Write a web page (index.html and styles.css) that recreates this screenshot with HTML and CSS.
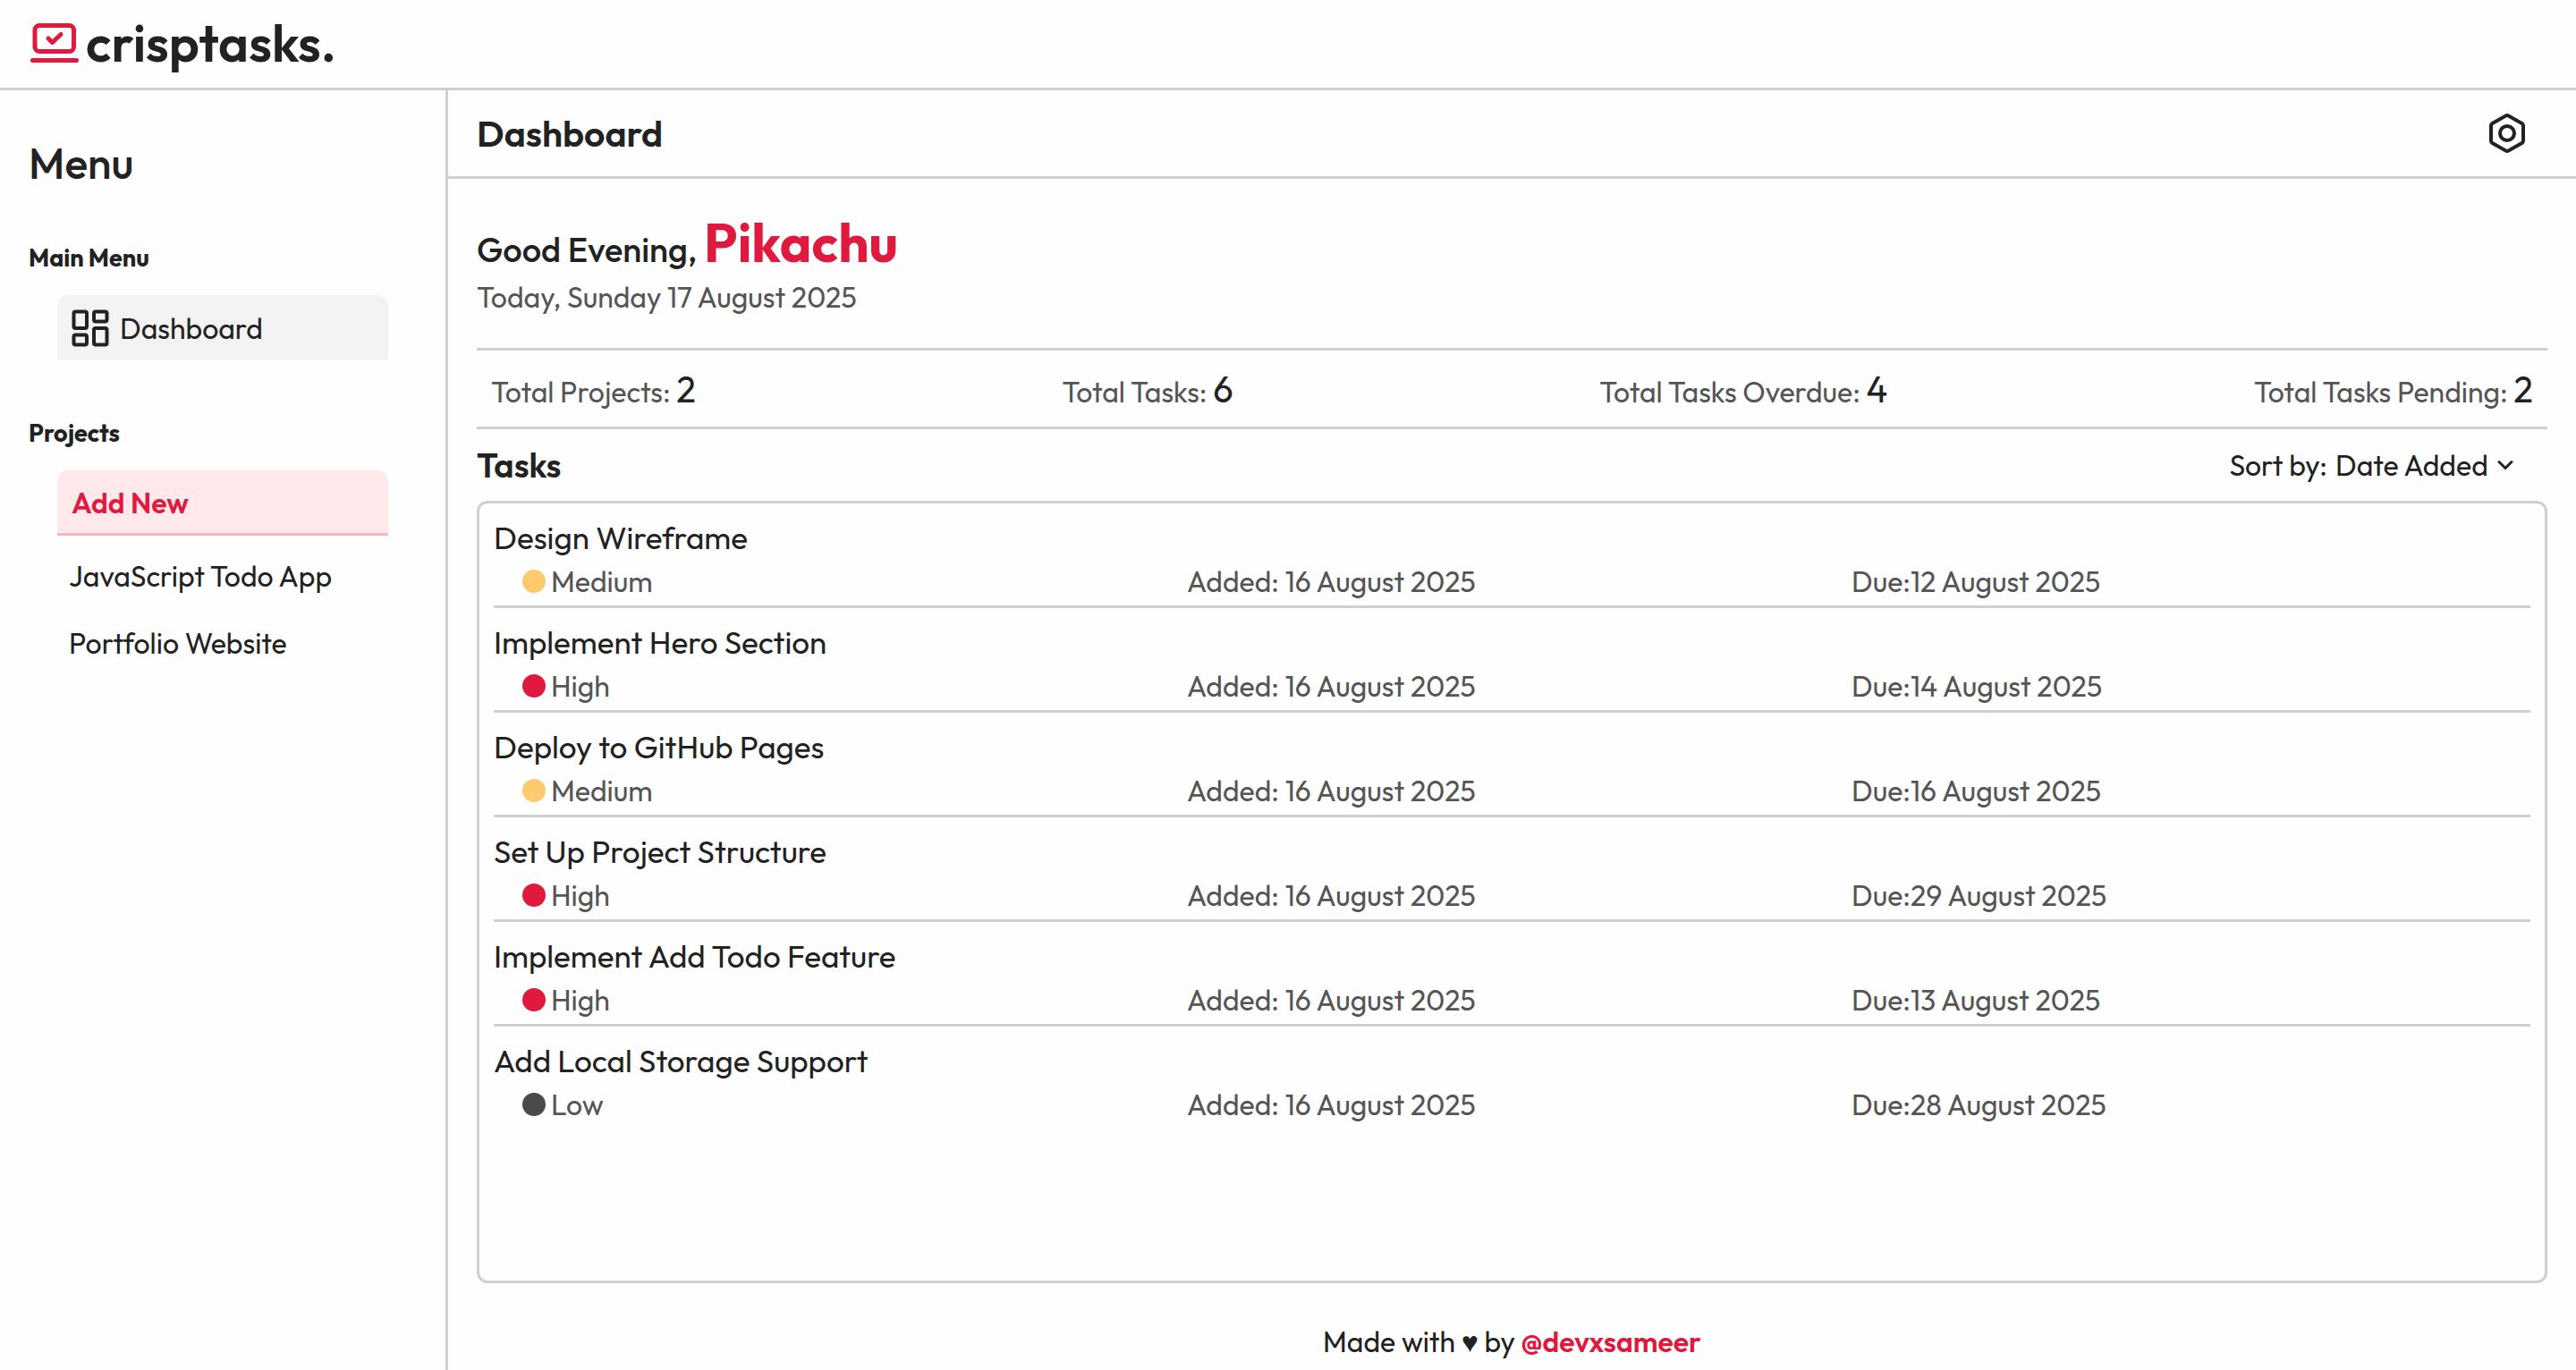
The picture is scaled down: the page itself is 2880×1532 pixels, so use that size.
FILE: index.html
```html
<!DOCTYPE html>
<html lang="en">
<head>
<meta charset="utf-8">
<meta name="viewport" content="width=device-width, initial-scale=1">
<title>crisptasks.</title>
<link rel="stylesheet" href="styles.css">
</head>
<body>
<header class="topbar">
  <svg class="logo-icon" viewBox="0 0 54 44" aria-hidden="true">
    <rect x="5" y="2.5" width="43.5" height="29" rx="5"/>
    <path d="M2.5 41.5h49M20 17l4.500 4.500 9.500-9"/>
  </svg>
  <span class="logo-text">crisptasks.</span>
</header>
<div class="shell">
  <aside class="sidebar">
    <h2 class="menu-title">Menu</h2>
    <nav class="menu-group">
      <h3 class="group-title">Main Menu</h3>
      <button class="nav-item" type="button">
        <svg class="nav-icon" viewBox="0 0 42 42" aria-hidden="true">
          <rect x="2.500" y="2.500" width="14.500" height="18.500" rx="2"/>
          <rect x="25" y="2.500" width="14.500" height="11" rx="2"/>
          <rect x="2.500" y="28.500" width="14.500" height="11" rx="2"/>
          <rect x="25" y="21" width="14.500" height="18.500" rx="2"/>
        </svg>
        <span>Dashboard</span>
      </button>
    </nav>
    <nav class="menu-group">
      <h3 class="group-title">Projects</h3>
      <button class="nav-item add-new" type="button">Add New</button>
      <ul class="projects">
        <li><a class="project" href="#javascript-todo-app">JavaScript Todo App</a></li>
        <li><a class="project" href="#portfolio-website">Portfolio Website</a></li>
      </ul>
    </nav>
  </aside>
  <div class="content">
    <div class="page-head">
      <h1 class="page-title">Dashboard</h1>
      <button class="settings" type="button" aria-label="Settings">
        <svg class="settings-icon" viewBox="0 0 44 46" aria-hidden="true">
          <path d="M20.500 3.500 5.500 12Q4 13 4 14.500v17q0 1.500 1.500 2.500l15 8.500q1.500.8 3 0l15-8.500q1.500-1 1.500-2.500v-17q0-1.500-1.500-2.500l-15-8.500q-1.500-.8-3 0z"/>
          <circle cx="22" cy="23" r="8"/>
        </svg>
      </button>
    </div>
    <main class="main">
      <p class="greeting">Good Evening, <strong class="user">Pikachu</strong></p>
      <p class="today">Today, Sunday 17 August 2025</p>
      <ul class="stats">
        <li>Total Projects: <span class="count">2</span></li>
        <li>Total Tasks: <span class="count">6</span></li>
        <li>Total Tasks Overdue: <span class="count">4</span></li>
        <li>Total Tasks Pending: <span class="count">2</span></li>
      </ul>
      <div class="tasks-head">
        <h2 class="tasks-title">Tasks</h2>
        <div class="sort">
          <label for="sort">Sort by:</label>
          <select class="sort-select" id="sort">
            <option>Date Added</option>
            <option>Due Date</option>
            <option>Priority</option>
          </select>
          <svg class="chevron" viewBox="0 0 18 12" aria-hidden="true"><path d="M2 2.500l7 7 7-7"/></svg>
        </div>
      </div>
      <ul class="tasks">
        <li class="task">
          <h3 class="task-name">Design Wireframe</h3>
          <div class="task-meta"><span class="priority"><i class="dot medium"></i>Medium</span><span>Added: 16 August 2025</span><span>Due:12 August 2025</span></div>
        </li>
        <li class="task">
          <h3 class="task-name">Implement Hero Section</h3>
          <div class="task-meta"><span class="priority"><i class="dot high"></i>High</span><span>Added: 16 August 2025</span><span>Due:14 August 2025</span></div>
        </li>
        <li class="task">
          <h3 class="task-name">Deploy to GitHub Pages</h3>
          <div class="task-meta"><span class="priority"><i class="dot medium"></i>Medium</span><span>Added: 16 August 2025</span><span>Due:16 August 2025</span></div>
        </li>
        <li class="task">
          <h3 class="task-name">Set Up Project Structure</h3>
          <div class="task-meta"><span class="priority"><i class="dot high"></i>High</span><span>Added: 16 August 2025</span><span>Due:29 August 2025</span></div>
        </li>
        <li class="task">
          <h3 class="task-name">Implement Add Todo Feature</h3>
          <div class="task-meta"><span class="priority"><i class="dot high"></i>High</span><span>Added: 16 August 2025</span><span>Due:13 August 2025</span></div>
        </li>
        <li class="task">
          <h3 class="task-name">Add Local Storage Support</h3>
          <div class="task-meta"><span class="priority"><i class="dot low"></i>Low</span><span>Added: 16 August 2025</span><span>Due:28 August 2025</span></div>
        </li>
      </ul>
    </main>
    <footer class="footer">Made with ♥ by <a class="author" href="#devxsameer">@devxsameer</a></footer>
  </div>
</div>
</body>
</html>
```
FILE: styles.css
```css
:root {
  --ink: #222;
  --muted: #555;
  --line: #cfcfcf;
  --accent: #e0193e;
}

* {
  box-sizing: border-box;
  margin: 0;
  padding: 0;
}

body {
  display: flex;
  flex-direction: column;
  min-height: 100vh;
  background: #fefefe;
  color: var(--ink);
  font-family: Outfit, "Liberation Sans", sans-serif;
  font-size: 32px;
  line-height: 40px;
}

ul { list-style: none; }
a { color: inherit; text-decoration: none; }
button, select { font: inherit; color: inherit; border: 0; background: none; cursor: pointer; }
svg { flex: none; fill: none; stroke: currentColor; stroke-linecap: round; stroke-linejoin: round; }

.topbar {
  display: flex;
  align-items: center;
  gap: 8px;
  height: 101px;
  padding: 0 34px 2px;
  border-bottom: 3px solid var(--line);
}
.logo-icon { width: 54px; height: 44px; stroke: var(--accent); stroke-width: 5; }
.logo-text { font-size: 58px; line-height: 64px; font-weight: 600; }

.shell { display: flex; flex: 1; }

.sidebar {
  flex: none;
  width: 501px;
  padding: 49px 64px 32px 32px;
  border-right: 3px solid var(--line);
}
.menu-title { margin-bottom: 58px; font-size: 48px; line-height: 64px; font-weight: 500; }
.menu-group + .menu-group { margin-top: 65px; }
.group-title { font-size: 27px; line-height: 32px; font-weight: 700; }
.nav-item {
  display: flex;
  align-items: center;
  gap: 12px;
  width: 370px;
  height: 73px;
  margin: 26px 0 0 32px;
  padding: 0 16px;
  border-radius: 12px 12px 0 0;
  background: #f3f3f3;
}
.nav-icon { width: 42px; height: 42px; stroke-width: 4; }
.add-new {
  padding-top: 2px;
  border-bottom: 3px solid #fdb5ba;
  background: #ffe9ea;
  color: var(--accent);
  font-weight: 600;
}
.projects { padding: 8px 0 0 45px; }
.project { display: block; line-height: 75px; }

.content { display: flex; flex: 1; flex-direction: column; min-width: 0; }
.page-head {
  display: flex;
  align-items: center;
  justify-content: space-between;
  height: 99px;
  padding: 0 55px 0 32px;
  border-bottom: 3px solid var(--line);
}
.page-title { font-size: 41px; line-height: 56px; font-weight: 600; }
.settings { display: flex; }
.settings-icon { width: 44px; height: 46px; stroke-width: 4; }

.main { display: flex; flex: 1; flex-direction: column; padding: 46px 32px 0; }
.greeting { font-size: 38px; line-height: 66px; font-weight: 500; }
.user { color: var(--accent); font-size: 60px; line-height: 48px; font-weight: 700; }
.today { color: var(--muted); }
.stats {
  display: flex;
  justify-content: space-between;
  margin-top: 37px;
  padding: 21px 16px 14px;
  border: solid var(--line);
  border-width: 3px 0;
  color: var(--muted);
  line-height: 50px;
}
.count { color: var(--ink); font-size: 40px; line-height: 40px; font-weight: 400; }
.tasks-head { display: flex; align-items: center; justify-content: space-between; height: 80px; padding-right: 38px; }
.tasks-title { font-size: 38px; font-weight: 600; }
.sort { display: flex; align-items: center; gap: 9px; }
.sort-select { appearance: none; }
.chevron { width: 18px; height: 12px; stroke-width: 3; }

.tasks {
  flex: 1;
  padding: 0 16px;
  border: 3px solid var(--line);
  border-radius: 12px;
}
.task { padding: 15px 0 7px; border-bottom: 3px solid var(--line); }
.task:last-child { border-bottom: 0; }
.task-name { font-size: 35px; line-height: 47px; font-weight: 400; }
.task-meta {
  display: grid;
  grid-template-columns: repeat(3, 1fr);
  margin-top: 5px;
  padding: 0 16px 0 32px;
  color: var(--muted);
}
.priority { display: flex; align-items: center; gap: 6px; }
.dot { width: 26px; height: 26px; border-radius: 50%; }
.medium { background: #fdca6e; }
.high { background: var(--accent); }
.low { background: #4a4a4a; }

.footer { padding: 45px 0 12px; text-align: center; }
.author { color: var(--accent); font-weight: 600; }
```
